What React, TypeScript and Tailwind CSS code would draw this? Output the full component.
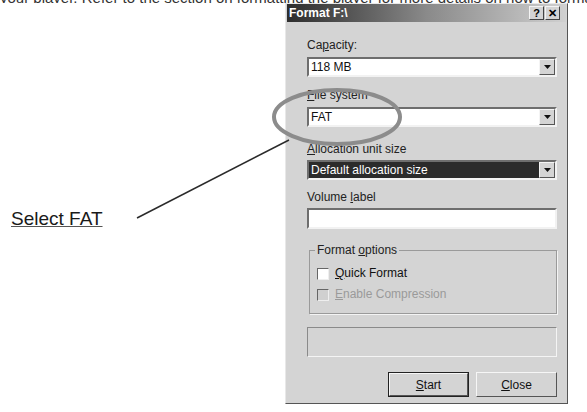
import React from 'react';

const font = { fontFamily: '"Liberation Sans", Arial, sans-serif' };

// Sunken 3D field edge used by combo boxes and text inputs
const sunken = 'border-2 border-t-[#6e6e6e] border-l-[#6e6e6e] border-b-[#f2f2f2] border-r-[#f2f2f2]';

const DropArrow: React.FC = () => (
    <div className="w-[16px] h-full bg-[#d4d4d4] border border-t-[#f4f4f4] border-l-[#f4f4f4] border-b-[#555] border-r-[#555] flex items-center justify-center">
        <svg width="7" height="4" viewBox="0 0 7 4">
            <polygon points="0,0 7,0 3.5,4" fill="#111" />
        </svg>
    </div>
);

interface ComboProps {
    value: string;
    selected?: boolean;
}

const Combo: React.FC<ComboProps> = ({ value, selected }) => (
    <div className={`h-[20px] w-[250px] bg-white flex ${sunken}`}>
        <div className={`flex-1 flex items-center px-[2px] text-[12px] ${selected ? 'bg-[#2b2b2b] text-white' : 'text-[#111]'}`}>
            {value}
        </div>
        <DropArrow />
    </div>
);

const Label: React.FC<{ children: React.ReactNode }> = ({ children }) => (
    <div className="text-[12px] text-[#222] leading-[13px]">{children}</div>
);

const Checkbox: React.FC<{ label: React.ReactNode; disabled?: boolean }> = ({ label, disabled }) => (
    <div className="flex items-center gap-[6px] leading-[13px]">
        <div className={`w-[12px] h-[12px] ${disabled ? 'bg-[#d0d0d0]' : 'bg-white'} border border-t-[#666] border-l-[#666] border-b-[#eee] border-r-[#eee]`} />
        <span className={`text-[12px] ${disabled ? 'text-[#9a9a9a]' : 'text-[#111]'}`}>{label}</span>
    </div>
);

const DlgButton: React.FC<{ children: React.ReactNode; isDefault?: boolean }> = ({ children, isDefault }) => (
    <div className={`w-[81px] h-[25px] ${isDefault ? 'border border-[#222]' : ''}`}>
        <div className="w-full h-full bg-[#d4d4d4] border border-t-[#f6f6f6] border-l-[#f6f6f6] border-b-[#555] border-r-[#555] flex items-center justify-center text-[12px] text-[#111]">
            {children}
        </div>
    </div>
);

const FormatDialog: React.FC = () => (
    <div className="w-[283px] h-[401px] bg-[#d4d4d4] border border-l-[#e8e8e8] border-t-[#e8e8e8] border-r-[#555] border-b-[#555] flex flex-col">
        {/* caption bar */}
        <div className="h-[18px] mx-[1px] mt-[0px] bg-gradient-to-r from-[#2e2e2e] via-[#8a8a8a] to-[#d0d0d0] flex items-center pl-[2px] pr-[6px]">
            <span className="text-white font-bold text-[12px] flex-1">Format F:\</span>
            <div className="flex">
                <div className="w-[15px] h-[14px] bg-[#d4d4d4] border border-t-[#f4f4f4] border-l-[#f4f4f4] border-b-[#444] border-r-[#444] flex items-center justify-center text-[11px] font-bold leading-none">?</div>
                <div className="w-[15px] h-[14px] ml-[1px] bg-[#d4d4d4] border border-t-[#f4f4f4] border-l-[#f4f4f4] border-b-[#444] border-r-[#444] flex items-center justify-center text-[11px] font-bold leading-none">✕</div>
            </div>
        </div>

        <div className="pl-[21px] pt-[17px] flex flex-col">
            <Label>Ca<span className="underline">p</span>acity:</Label>
            <div className="mt-[5px]"><Combo value="118 MB" /></div>

            <div className="mt-[12px]"><Label><span className="underline">F</span>ile system</Label></div>
            <div className="mt-[5px]"><Combo value="FAT" /></div>

            <div className="mt-[16px]"><Label><span className="underline">A</span>llocation unit size</Label></div>
            <div className="mt-[4px]"><Combo value="Default allocation size" selected /></div>

            <div className="mt-[11px]"><Label>Volume <span className="underline">l</span>abel</Label></div>
            <div className="mt-[4px] h-[21px] w-[250px] bg-white border-2 border-t-[#6e6e6e] border-l-[#6e6e6e] border-b-[#f2f2f2] border-r-[#f2f2f2]" />

            {/* options group */}
            <div className="mt-[21px] ml-[2px] w-[248px] h-[64px] border border-[#9a9a9a] shadow-[1px_1px_0_#f4f4f4] relative pt-[16px] pl-[7px] flex flex-col gap-[8px]">
                <span className="absolute -top-[8px] left-[5px] px-[2px] bg-[#d4d4d4] text-[12px] leading-[14px] text-[#222]">
                    Format <span className="underline">o</span>ptions
                </span>
                <Checkbox label={<><span className="underline">Q</span>uick Format</>} />
                <Checkbox label={<><span className="underline">E</span>nable Compression</>} disabled />
            </div>

            {/* progress well */}
            <div className="mt-[13px] w-[250px] h-[30px] border border-t-[#8a8a8a] border-l-[#8a8a8a] border-b-[#f4f4f4] border-r-[#f4f4f4]" />

            <div className="mt-[15px] w-[250px] flex justify-end gap-[7px]">
                <DlgButton isDefault><span className="underline">S</span>tart</DlgButton>
                <DlgButton><span className="underline">C</span>lose</DlgButton>
            </div>
        </div>
    </div>
);

export default function App() {
    return (
        <div className="w-[587px] h-[412px] bg-white relative overflow-hidden" style={font}>
            {/* bottom of the paragraph line above, cut off by the page edge */}
            <div className="h-[3px] overflow-hidden">
                <div className="-mt-[10px] text-[15px] leading-[15px] text-[#333] whitespace-nowrap">
                    your player. Refer to the section on formatting the player for more details on how to format it.
                </div>
            </div>

            <div className="flex">
                <div className="w-[285px] pl-[11px] pt-[202px]">
                    <span className="text-[19px] text-[#1a1a1a] underline decoration-[#555]">Select FAT</span>
                </div>
                <FormatDialog />
            </div>

            {/* callout ring and pointer line */}
            <svg className="absolute inset-0 pointer-events-none" width="587" height="412">
                <ellipse cx="337" cy="117" rx="63" ry="27" fill="none" stroke="#8c8c8c" strokeWidth="4" />
                <line x1="137" y1="218" x2="289" y2="140" stroke="#2a2a2a" strokeWidth="1.5" />
            </svg>
        </div>
    );
}
